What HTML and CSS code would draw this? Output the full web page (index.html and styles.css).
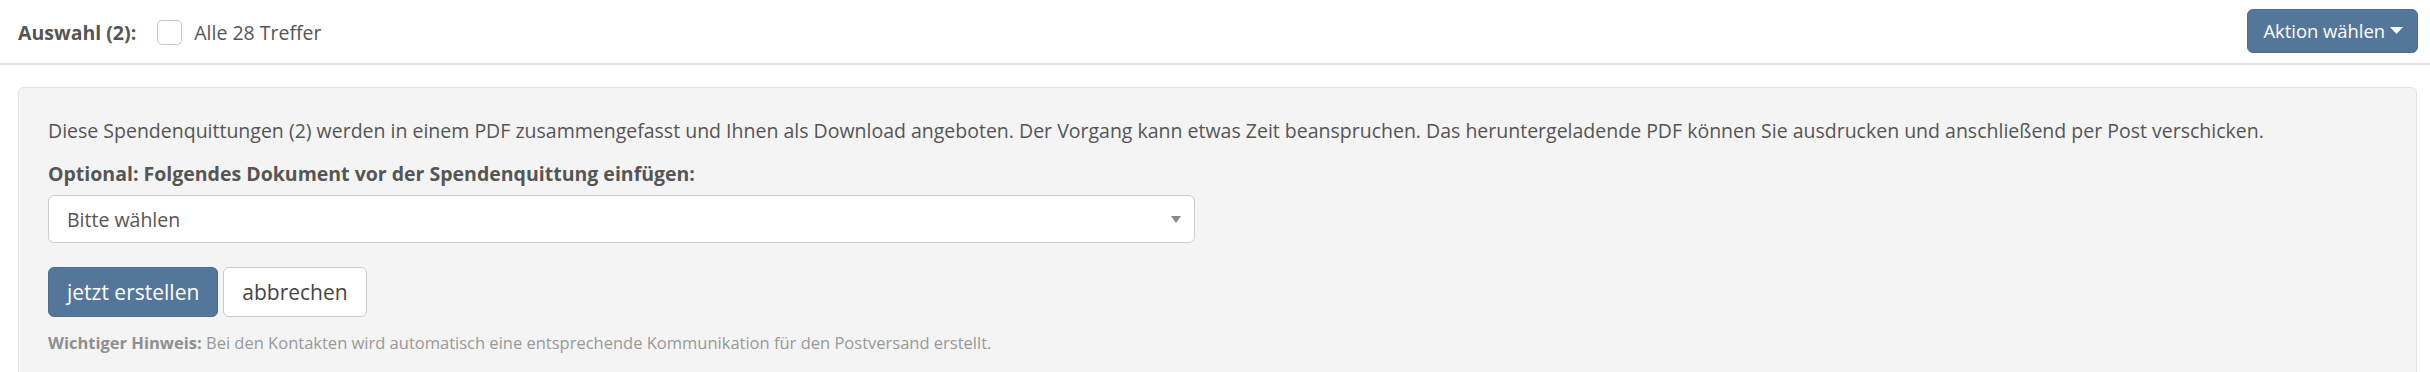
FILE: index.html
```html
<!DOCTYPE html>
<html lang="de">
<head>
<meta charset="utf-8">
<title>Auswahl</title>
<link rel="stylesheet" href="styles.css">
</head>
<body>
<header class="toolbar">
  <div class="selection">
    <span class="selection-title">Auswahl (2):</span>
    <label class="select-all">
      <span class="checkbox"></span>
      <span>Alle 28 Treffer</span>
    </label>
  </div>
  <button class="btn btn-primary btn-sm" type="button">Aktion wählen
    <svg class="caret" width="13" height="7" viewBox="0 0 13 7"><path d="M0 0H13L6.5 7Z" fill="#fff"/></svg>
  </button>
</header>
<main class="content">
  <section class="well">
    <p class="description">Diese Spendenquittungen (2) werden in einem PDF zusammengefasst und Ihnen als Download angeboten. Der Vorgang kann etwas Zeit beanspruchen. Das heruntergeladende PDF können Sie ausdrucken und anschließend per Post verschicken.</p>
    <div class="form-group">
      <div class="field-label">Optional: Folgendes Dokument vor der Spendenquittung einfügen:</div>
      <div class="select">
        <span>Bitte wählen</span>
        <svg width="10" height="7" viewBox="0 0 10 7"><path d="M0 0H10L5 7Z" fill="#888"/></svg>
      </div>
    </div>
    <div class="actions">
      <button class="btn btn-primary" type="button">jetzt erstellen</button>
      <button class="btn btn-default" type="button">abbrechen</button>
    </div>
    <p class="hint"><strong>Wichtiger Hinweis:</strong> Bei den Kontakten wird automatisch eine entsprechende Kommunikation für den Postversand erstellt.</p>
  </section>
</main>
</body>
</html>
```
FILE: styles.css
```css
* {
  box-sizing: border-box;
}

body {
  margin: 0;
  font-family: "Open Sans", "Liberation Sans", sans-serif;
  color: #555;
  background: #fff;
}

.toolbar {
  display: flex;
  align-items: center;
  justify-content: space-between;
  height: 65px;
  padding: 0 12px 4px 18px;
  border-bottom: 2px solid #e2e2e2;
}

.selection {
  display: flex;
  align-items: center;
  font-size: 19.5px;
  padding-top: 6px;
}

.selection-title {
  font-weight: 700;
  color: #555;
}

.select-all {
  display: flex;
  align-items: center;
  gap: 12px;
  margin-left: 21px;
  color: #555;
}

.checkbox {
  width: 25px;
  height: 25px;
  border: 1.5px solid #c8c8c8;
  border-radius: 5px;
  background: #fff;
}

.btn {
  font-family: "Open Sans", "Liberation Sans", sans-serif;
  font-size: 21px;
  line-height: 30px;
  padding: 9px 18px;
  border: 1.5px solid transparent;
  border-radius: 6px;
  cursor: pointer;
}

.btn-primary {
  background: #54769b;
  border-color: #4d6e92;
  color: #fff;
}

.btn-default {
  background: #fff;
  border-color: #ccc;
  color: #444;
}

.btn-sm {
  display: flex;
  align-items: center;
  gap: 5px;
  height: 44px;
  font-size: 18.4px;
  line-height: 27px;
  padding: 0 14px 0 15px;
  margin-bottom: -2px;
}

.caret {
  display: block;
}

.content {
  padding: 22px 13px 0 18px;
}

.well {
  background: #f4f4f4;
  border: 1px solid #e3e3e3;
  border-radius: 6px;
  padding: 28px 29px 40px;
  min-height: 320px;
}

.description {
  margin: 0 0 13px;
  font-size: 19.5px;
  line-height: 30px;
  color: #555;
}

.field-label {
  font-size: 19.5px;
  line-height: 30px;
  font-weight: 700;
  color: #555;
  margin-bottom: 6px;
}

.select {
  display: flex;
  align-items: center;
  justify-content: space-between;
  width: 1147px;
  height: 48px;
  padding: 0 13px 0 18px;
  background: #fff;
  border: 1.5px solid #ccc;
  border-radius: 6px;
  font-size: 19.5px;
  color: #555;
}

.actions {
  display: flex;
  gap: 5px;
  margin-top: 24px;
}

.actions .btn {
  height: 50px;
}

.hint {
  margin: 14px 0 0;
  font-size: 16.5px;
  line-height: 24px;
  color: #999;
}

.hint strong {
  color: #8f8f8f;
}
```
